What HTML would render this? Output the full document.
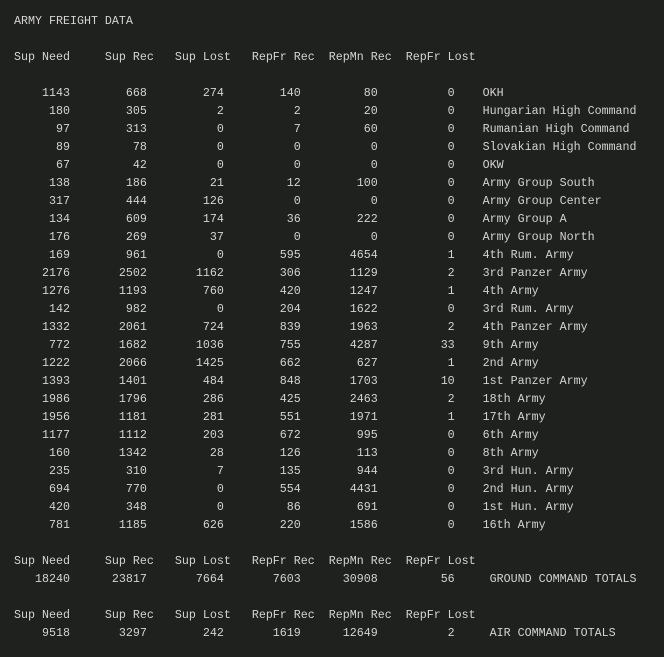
<!DOCTYPE html>
<html><head><meta charset="utf-8"><style>
html,body{margin:0;padding:0;background:#1f211f;width:664px;height:657px;overflow:hidden}
pre{margin:0;padding:12px 0 0 14px;font-family:"Liberation Mono",monospace;font-size:11.67px;line-height:18px;color:#d4d4d2}
</style></head><body><pre>ARMY FREIGHT DATA

Sup Need     Sup Rec   Sup Lost   RepFr Rec  RepMn Rec  RepFr Lost

    1143        668        274        140         80          0    OKH
     180        305          2          2         20          0    Hungarian High Command
      97        313          0          7         60          0    Rumanian High Command
      89         78          0          0          0          0    Slovakian High Command
      67         42          0          0          0          0    OKW
     138        186         21         12        100          0    Army Group South
     317        444        126          0          0          0    Army Group Center
     134        609        174         36        222          0    Army Group A
     176        269         37          0          0          0    Army Group North
     169        961          0        595       4654          1    4th Rum. Army
    2176       2502       1162        306       1129          2    3rd Panzer Army
    1276       1193        760        420       1247          1    4th Army
     142        982          0        204       1622          0    3rd Rum. Army
    1332       2061        724        839       1963          2    4th Panzer Army
     772       1682       1036        755       4287         33    9th Army
    1222       2066       1425        662        627          1    2nd Army
    1393       1401        484        848       1703         10    1st Panzer Army
    1986       1796        286        425       2463          2    18th Army
    1956       1181        281        551       1971          1    17th Army
    1177       1112        203        672        995          0    6th Army
     160       1342         28        126        113          0    8th Army
     235        310          7        135        944          0    3rd Hun. Army
     694        770          0        554       4431          0    2nd Hun. Army
     420        348          0         86        691          0    1st Hun. Army
     781       1185        626        220       1586          0    16th Army

Sup Need     Sup Rec   Sup Lost   RepFr Rec  RepMn Rec  RepFr Lost
   18240      23817       7664       7603      30908         56     GROUND COMMAND TOTALS

Sup Need     Sup Rec   Sup Lost   RepFr Rec  RepMn Rec  RepFr Lost
    9518       3297        242       1619      12649          2     AIR COMMAND TOTALS
</pre></body></html>
